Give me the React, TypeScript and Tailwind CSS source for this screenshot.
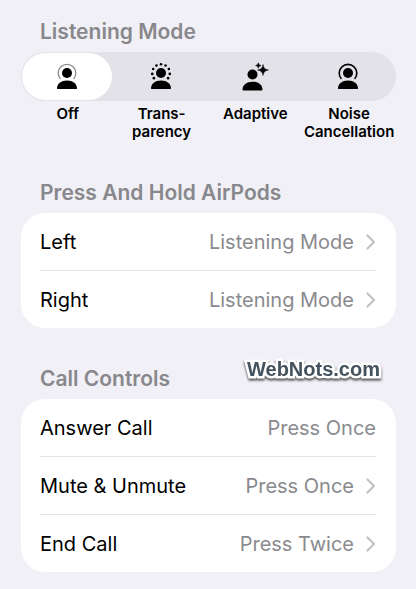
import { useState } from "react";
import type { ReactNode } from "react";

function Person({ children }: { children?: ReactNode }) {
  return (
    <svg viewBox="0 0 32 30" className="h-[30px] w-8" fill="currentColor" aria-hidden="true">
      <circle cx="16" cy="11" r="5" />
      <path d="M6 26.2C6 21.6 10.2 18.4 16 18.4s10 3.2 10 7.8c0 .6-.4.9-1 .9H7c-.6 0-1-.3-1-.9Z" />
      {children}
    </svg>
  );
}

const RING = "M9.4 17A8.8 8.8 0 1 1 22.6 17";

function OffIcon() {
  return (
    <Person>
      <path d={RING} fill="none" stroke="#8a8a8c" strokeWidth="1.3" />
    </Person>
  );
}

function TransparencyIcon() {
  const angles = [-216, -186, -153, -121, -90, -59, -27, 6, 36];
  return (
    <Person>
      {angles.map((angle) => {
        const t = (angle * Math.PI) / 180;
        return <circle key={angle} cx={16 + 8.8 * Math.cos(t)} cy={11 + 8.8 * Math.sin(t)} r="1.3" />;
      })}
    </Person>
  );
}

function AdaptiveIcon() {
  return (
    <svg viewBox="0 0 32 30" className="h-[30px] w-8" fill="currentColor" aria-hidden="true">
      <circle cx="14.5" cy="12.5" r="5" />
      <path d="M4.5 27.600c0-4.600 4.200-7.800 10-7.800s10 3.200 10 7.800c0 .6-.4.9-1 .9h-18c-.6 0-1-.3-1-.9Z" />
      <path d="M25 2.500Q25.500 7.500 30.500 8Q25.500 8.500 25 13.500Q24.500 8.500 19.500 8Q24.500 7.500 25 2.500Z" stroke="currentColor" strokeWidth=".5" />
      <path d="M20.300 .8Q20.600 3.200 23 3.500Q20.600 3.800 20.300 6.200Q20 3.800 17.600 3.500Q20 3.200 20.300 .8Z" stroke="currentColor" strokeWidth=".5" />
    </svg>
  );
}

function NoiseIcon() {
  return (
    <Person>
      <path d={RING} fill="none" stroke="currentColor" strokeWidth="1.6" />
    </Person>
  );
}

const MODES = [
  { id: "off", label: "Off", Icon: OffIcon },
  { id: "transparency", label: "Trans-\nparency", Icon: TransparencyIcon },
  { id: "adaptive", label: "Adaptive", Icon: AdaptiveIcon },
  { id: "noise", label: "Noise\nCancellation", Icon: NoiseIcon },
];

function Heading({ children }: { children: ReactNode }) {
  return <h2 className="mb-1.5 pl-[19px] text-[21px] leading-7 font-semibold text-[#88888c]">{children}</h2>;
}

function ModePicker() {
  const [mode, setMode] = useState("off");
  return (
    <div role="radiogroup" aria-label="Listening Mode" className="grid grid-cols-4">
      {MODES.map(({ id, label, Icon }) => (
        <label key={id} className="group relative flex cursor-pointer flex-col items-center">
          <input
            type="radio"
            name="mode"
            value={id}
            checked={mode === id}
            onChange={() => setMode(id)}
            className="peer sr-only"
          />
          <span className="w-full bg-[#e3e2e8] py-px pr-[3px] pl-px group-first:rounded-l-full group-last:rounded-r-full">
            <span className="flex h-[47px] items-center justify-center rounded-full group-has-checked:bg-white">
              <Icon />
            </span>
          </span>
          <span className="mt-1 text-center text-[15px] leading-[18px] font-semibold whitespace-pre">{label}</span>
        </label>
      ))}
    </div>
  );
}

function Row({ label, value, link = true }: { label: string; value: string; link?: boolean }) {
  const content = (
    <>
      <span>{label}</span>
      <span className="ml-auto text-[#8a8a8e]">{value}</span>
      {link && (
        <svg viewBox="0 0 10 16" className="ml-3 h-4 w-2.5" fill="none" stroke="#c2c2c5" strokeWidth="2.2" strokeLinecap="round" strokeLinejoin="round" aria-hidden="true">
          <path d="M1.500 1.500 8 8l-6.500 6.500" />
        </svg>
      )}
    </>
  );
  const look = "flex h-[57px] w-full items-center text-left";
  return (
    <li className="border-t border-[#e5e5e8] first:border-t-0">
      {link ? (
        <button type="button" className={look}>{content}</button>
      ) : (
        <div className={look}>{content}</div>
      )}
    </li>
  );
}

function Card({ children }: { children: ReactNode }) {
  return <ul className="rounded-3xl bg-white pr-5 pl-[19px] text-xl leading-7">{children}</ul>;
}

export default function App() {
  return (
    <main className="min-h-screen bg-[#f1f0f6] pt-[18px] pr-5 pb-[17px] pl-[21px] font-['Inter','Liberation_Sans',sans-serif] text-black">
      <section>
        <Heading>Listening Mode</Heading>
        <ModePicker />
      </section>
      <section className="mt-[38px]">
        <Heading>Press And Hold AirPods</Heading>
        <Card>
          <Row label="Left" value="Listening Mode" />
          <Row label="Right" value="Listening Mode" />
        </Card>
      </section>
      <section className="relative mt-[37px]">
        <Heading>Call Controls</Heading>
        <span className="absolute -top-2 right-4 font-['Liberation_Sans',sans-serif] text-xl leading-6 font-bold text-[#44525d] drop-shadow-[0_2px_1px_#555] [-webkit-text-stroke:5px_white] [paint-order:stroke_fill]">
          WebNots.com
        </span>
        <Card>
          <Row label="Answer Call" value="Press Once" link={false} />
          <Row label="Mute & Unmute" value="Press Once" />
          <Row label="End Call" value="Press Twice" />
        </Card>
      </section>
    </main>
  );
}
